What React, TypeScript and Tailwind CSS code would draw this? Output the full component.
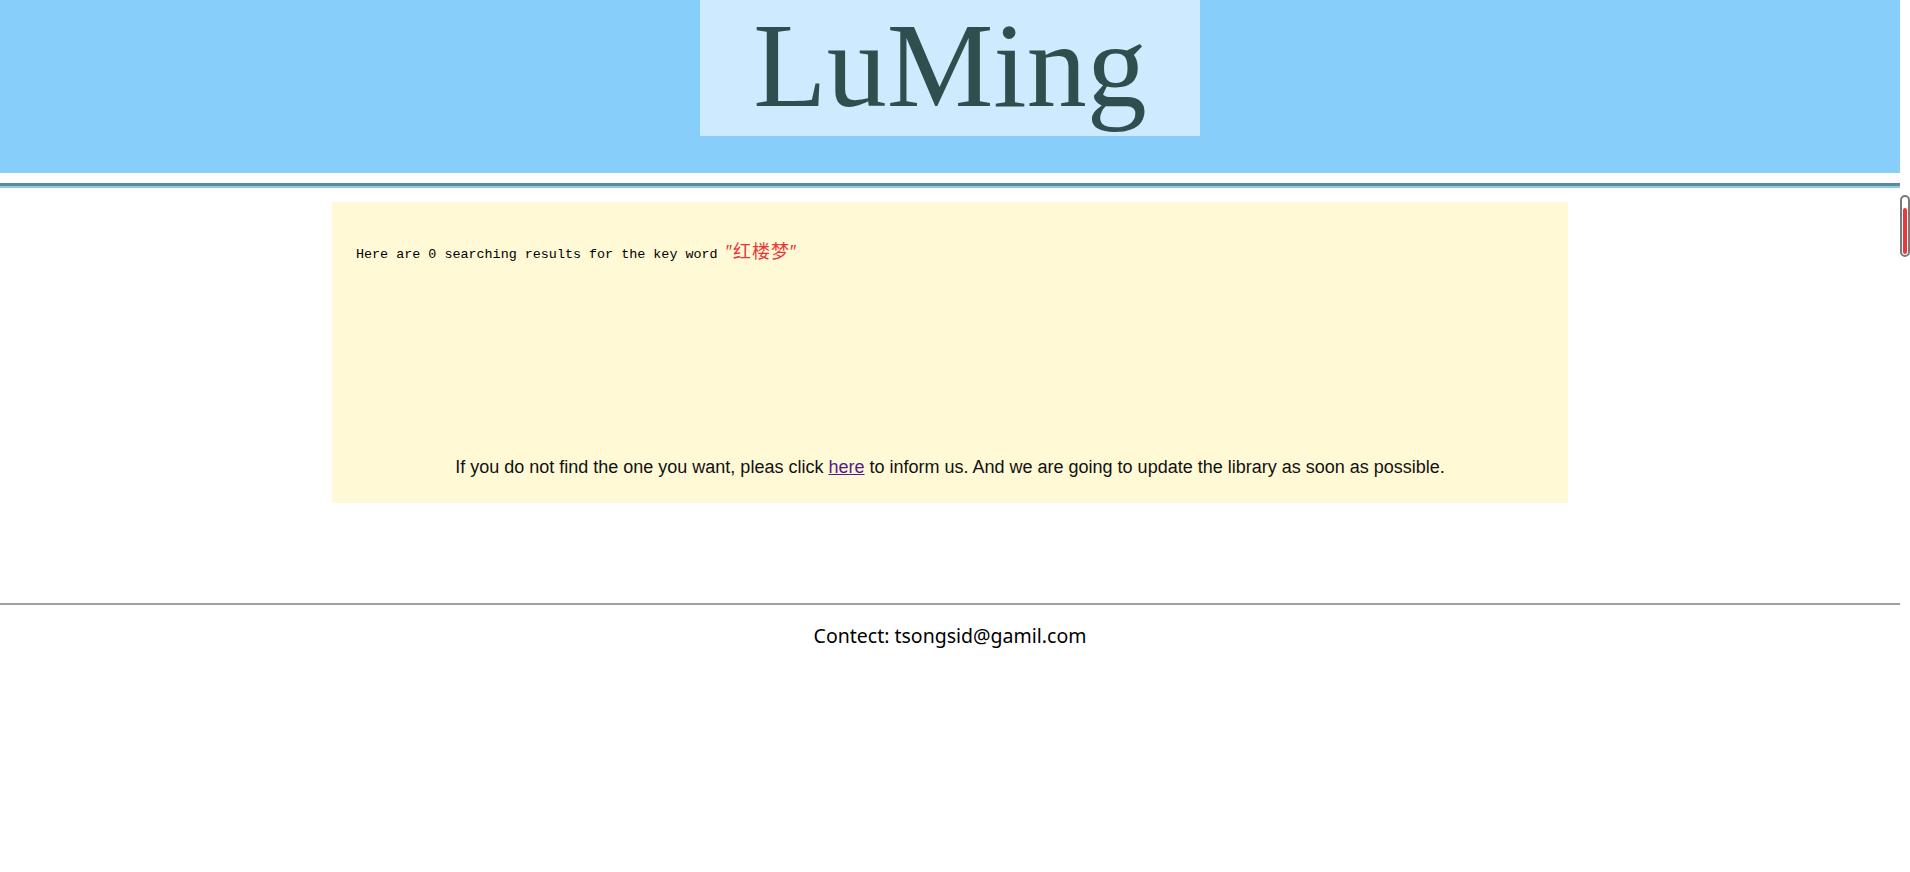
export default function App() {
  return (
    <div className="flex w-[1910px] min-h-[872px] bg-white">
      <div className="w-[1900px] flex flex-col">
        {/* Header */}
        <header className="h-[173px] bg-[#87cefa] flex justify-center">
          <div className="w-[500px] h-[136px] bg-[#cdeafe] flex items-start justify-center">
            <h1 className="font-['Liberation_Serif',serif] text-[120px] leading-none text-[#2f4f4f] mt-[6px]">
              LuMing
            </h1>
          </div>
        </header>

        {/* Double rule */}
        <div className="mt-[10px] h-[3px] bg-[#5a8ba0]" />
        <div className="h-[2px] bg-[#8ccbee]" />

        {/* Results */}
        <main className="mt-[14px] mx-auto w-[1236px] h-[301px] bg-[#fff9d6] flex flex-col justify-between px-[24px] pt-[40px] pb-[24px]">
          <p className="font-['Liberation_Mono',monospace] text-[13.4px] text-black leading-[20px]">
            Here are 0 searching results for the key word{' '}
            <span className="font-['Liberation_Sans','Noto_Sans_CJK_SC',sans-serif] text-[18px] text-[#e8363a] tracking-[1px]">
              ″红楼梦″
            </span>
          </p>
          <p className="font-['Liberation_Sans',Arial,sans-serif] text-[18px] text-[#111] text-center leading-[24px]">
            If you do not find the one you want, pleas click{' '}
            <a href="#" className="text-[#551a8b] underline">
              here
            </a>{' '}
            to inform us. And we are going to update the library as soon as possible.
          </p>
        </main>

        {/* Footer */}
        <footer className="mt-[100px]">
          <div className="h-[2px] bg-[#a0a0a0]" />
          <p className="mt-[18px] text-center font-['Noto_Sans','Noto_Sans_CJK_SC',sans-serif] text-[19.5px] leading-[26px] text-black">
            Contect: tsongsid@gamil.com
          </p>
        </footer>
      </div>

      {/* Scrollbar */}
      <div className="w-[10px] flex justify-center">
        <div className="mt-[195px] w-[10px] h-[62px] rounded-full border-2 border-[#7a7a7a] bg-white flex flex-col items-center justify-end p-[1px]">
          <div className="w-[4px] h-[46px] rounded-full bg-[#e8393d]" />
        </div>
      </div>
    </div>
  );
}
